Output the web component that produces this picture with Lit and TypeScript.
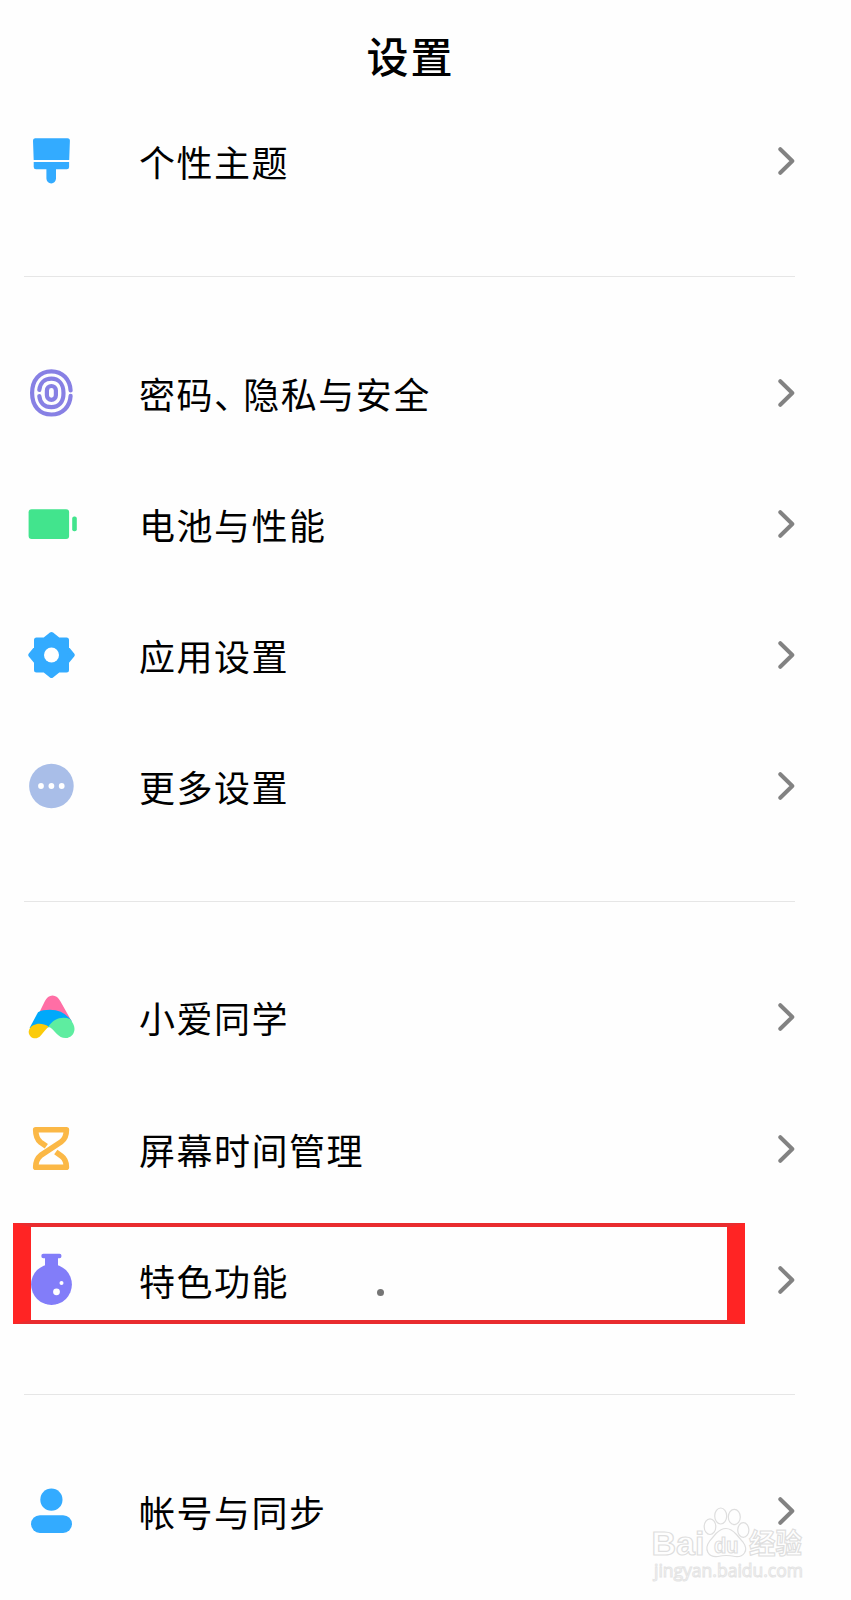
import { LitElement, html, css, svg } from "lit";
import { customElement, property } from "lit/decorators.js";

const icons: Record<string, unknown> = {
  theme: svg`<g fill="#33abff"><path d="M11 5.3H43.500Q46 5.300 45.900 7.800L45.200 27H9.700L9 7.800Q8.900 5.300 11 5.300Z"/><path d="M9.700 28.900H45.100V34Q45.100 36.300 42.800 36.300H32V45.600a4.800 4.800 0 0 1-9.600 0V36.300H12Q9.700 36.300 9.700 34Z"/></g>`,
  finger: svg`<g fill="none" stroke="#8780e4" stroke-width="4.200" stroke-linecap="round"><path d="M46.600 25.500C46 14.500 38.500 6.300 27.400 6.300C15.500 6.300 8.100 15 8.100 28S15.500 49.500 27.400 49.500C38.500 49.500 46 41.500 46.600 30.800"/><path d="M15.300 25C16 18 20.500 13.700 27.400 13.700S39.500 18.500 39.500 28S34.500 42.100 27.400 42.100S16 37.800 15.300 31"/><rect x="22.900" y="21" width="9" height="13.800" rx="4.500"/></g>`,
  battery: svg`<g fill="#42e48d"><rect x="4.600" y="13.300" width="40.500" height="29.600" rx="3"/><rect x="48.200" y="20.600" width="4.600" height="14.600" rx="2"/></g>`,
  gear: svg`<path fill="#33abff" stroke="#33abff" stroke-width="5" stroke-linejoin="round" d="M27.500 7.500L34.300 13H42.500V21.200L48.300 28L42.500 34.800V43H34.300L27.500 48.500L20.700 43H12.500V34.800L6.700 28L12.500 21.200V13H20.700Z"/><circle cx="27.500" cy="28" r="7.500" fill="#fff"/>`,
  more: svg`<circle cx="27.400" cy="28" r="22.300" fill="#a9bee8"/><g fill="#fff"><circle cx="17" cy="28" r="2.900"/><circle cx="27.400" cy="28" r="2.900"/><circle cx="37.700" cy="28" r="2.900"/></g>`,
  ai: svg`<path fill="#ff6ea5" d="M14.800 24.500L20.700 12.500Q23.500 6.500 28.500 6.500T36.500 12.500L47.500 32Z"/><path fill="#00a9fb" d="M5.600 39L14 23.200Q18.500 20.800 26 20.800Q40 20.800 48 32.500L30 37L24.500 38.200Z"/><path fill="#fbcb0b" d="M5.200 40.500C8 34.500 17 32.500 24.600 37.600Q21 41.500 17 46.200C14 50 9.500 50 6.800 47.700Q3.600 44.500 5.200 40.500Z"/><path fill="#5eeda0" d="M24.200 37.900C29.500 29.500 38.500 26.800 46.300 30.300L49 34.500C52.500 41 49.500 47.500 43.500 48.900C35 50.500 31 41.500 26.600 38.700Q25.400 37.800 24.200 37.900Z"/>`,
  hourglass: svg`<path fill="none" stroke="#fbb846" stroke-width="5.600" stroke-linejoin="round" d="M22.300 25.300L16.500 21.200Q11.700 17.500 11.700 8.800H42.400Q42.400 17.200 37.300 20.700L16.700 34.400Q11.700 38.200 11.700 46.300H42.400Q42.400 38.600 37.700 35.200L31.800 31"/>`,
  flask: svg`<g fill="#827df9"><path d="M19.500 1.800H35.500Q37.500 1.800 37.500 4T35.500 6.300H34V16H21V6.300H19.500Q17.300 6.300 17.300 4T19.500 1.800Z"/><circle cx="27.500" cy="32.500" r="20.400"/></g><g fill="#fff"><circle cx="37.500" cy="31" r="2"/><circle cx="32.500" cy="39.800" r="3.400"/></g>`,
  user: svg`<g fill="#33abff"><circle cx="27.400" cy="16.700" r="11.100"/><rect x="7" y="32.200" width="41" height="17.700" rx="8.850"/></g>`,
};

const groups: [string, string][][] = [
  [["theme", "个性主题"]],
  [["finger", "密码、隐私与安全"], ["battery", "电池与性能"], ["gear", "应用设置"], ["more", "更多设置"]],
  [["ai", "小爱同学"], ["hourglass", "屏幕时间管理"], ["flask", "特色功能"]],
  [["user", "帐号与同步"]],
];

@customElement("settings-row")
class SettingsRow extends LitElement {
  @property() icon = "";
  @property() label = "";
  @property({ type: Boolean }) marked = false;

  static styles = css`
    :host { display: flex; align-items: center; height: 131.2px; position: relative; }
    .icon { width: 55px; height: 56px; flex: none; }
    .label { flex: 1; padding: 0 0 0 60px; font-size: 36px; line-height: 52px; letter-spacing: 1.500px; color: #000; white-space: nowrap; }
    .comma { font-feature-settings: "halt"; margin-right: 9.800px; }
    .chevron { width: 20px; height: 32px; flex: none; }
    .frame { position: absolute; left: -11px; top: 9px; width: 732px; height: 101px; box-sizing: border-box; border: solid; border-width: 4px 18px; border-color: #e92c2f #ff2424; }
    .dot { position: absolute; left: 352.500px; top: 74.500px; width: 7px; height: 7px; border-radius: 50%; background: #757575; }
  `;

  render() {
    const parts = this.label.split("、");
    return html`
      ${this.marked ? html`<div class="frame"></div><div class="dot"></div>` : ""}
      <svg class="icon" viewBox="0 0 55 56">${icons[this.icon]}</svg>
      <div class="label">${parts[0]}${parts.length > 1 ? html`<span class="comma">、</span>${parts[1]}` : ""}</div>
      <svg class="chevron" viewBox="0 0 20 32"><path d="M5.300 4.200L17.300 16L5.300 27.800" fill="none" stroke="#828282" stroke-width="4" stroke-linecap="round" stroke-linejoin="round"/></svg>
    `;
  }
}

@customElement("app-root")
class AppRoot extends LitElement {
  static styles = css`
    :host { display: block; position: relative; box-sizing: border-box; width: 851px; height: 1600px; overflow: hidden; padding: 0 56px 0 24px; background: #fefefe; font-family: "Noto Sans CJK SC", sans-serif; }
    .title { margin: 0; height: 95.900px; box-sizing: border-box; padding-top: 24px; text-align: center; font-size: 42px; line-height: 62px; font-weight: 500; letter-spacing: 2px; text-indent: 2px; color: #000; }
    .group + .group { margin-top: 48.900px; border-top: 1px solid #e6e6e6; padding-top: 50.100px; }
    .watermark { position: absolute; left: 645px; top: 1500px; width: 170px; height: 90px; overflow: visible; }
    .mark { font-family: "Liberation Sans", "Noto Sans CJK SC", sans-serif; font-weight: 700; fill: #fefefe; stroke: #dedede; stroke-width: 1.200px; }
    .site { font-family: "Open Sans", sans-serif; fill: #fefefe; stroke: #e4e4e4; stroke-width: 1px; }
    .paw { fill: #fefefe; stroke: #dedede; stroke-width: 1.200px; }
  `;

  render() {
    return html`
      <h1 class="title">设置</h1>
      ${groups.map((g) => html`<div class="group">
        ${g.map(([icon, label]) => html`<settings-row .icon=${icon} .label=${label} .marked=${icon === "flask"}></settings-row>`)}
      </div>`)}
      <svg class="watermark" viewBox="0 0 170 90">
        <text class="mark" x="6.500" y="55" font-size="33" textLength="53" lengthAdjust="spacingAndGlyphs">Bai</text>
        <g class="paw">
          <ellipse cx="65" cy="26.700" rx="5.800" ry="7.800"/><ellipse cx="75.700" cy="16" rx="6" ry="8"/><ellipse cx="89.300" cy="17" rx="6" ry="7.600"/><ellipse cx="98.300" cy="30" rx="5.600" ry="7.300"/>
          <path d="M71 33.500Q76 28.500 81 28.500T91.500 34.500L98 42C104.500 51 98 57.500 90 56.500Q81 54.500 73 56.500C63 57.500 58.500 49.500 65 40.500Z"/>
        </g>
        <text class="mark" x="69" y="52.500" font-size="22" textLength="24.500" lengthAdjust="spacingAndGlyphs">du</text>
        <text class="mark" x="104" y="53.500" font-size="28" textLength="53" lengthAdjust="spacingAndGlyphs">经验</text>
        <text class="site" x="9" y="76.500" font-size="17.500" textLength="149" lengthAdjust="spacingAndGlyphs">jingyan.baidu.com</text>
      </svg>
    `;
  }
}
